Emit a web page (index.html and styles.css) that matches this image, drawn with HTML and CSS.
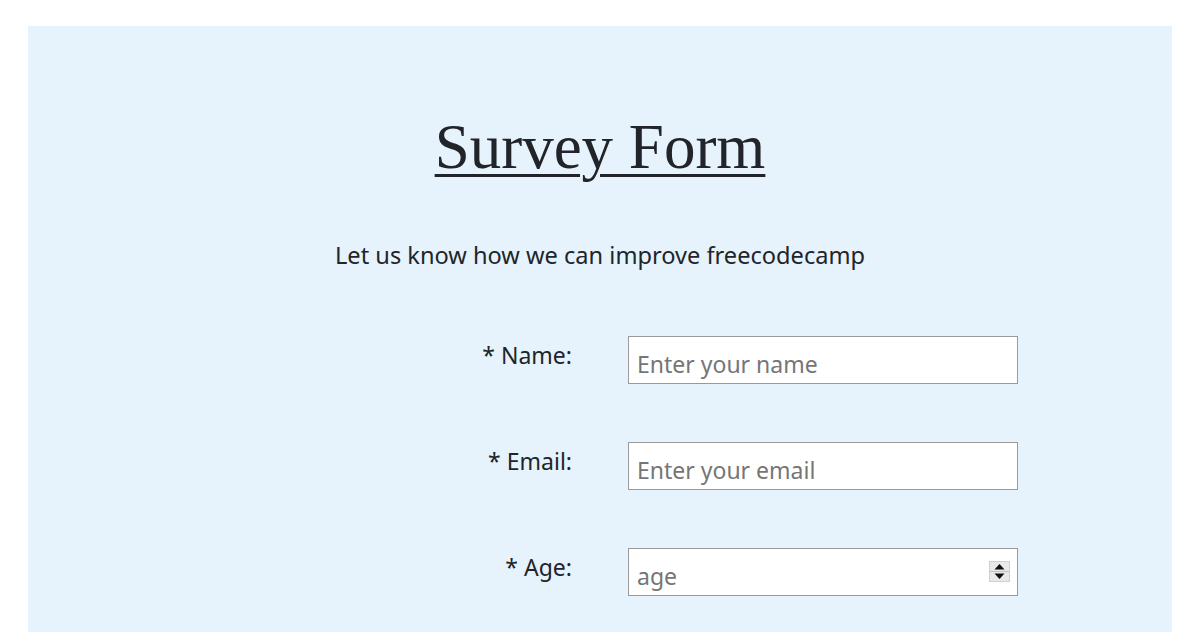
FILE: index.html
```html
<!DOCTYPE html>
<html lang="en">
<head>
<meta charset="utf-8">
<title>Survey Form</title>
<link rel="stylesheet" href="styles.css">
</head>
<body>
<main class="panel">
  <h1 class="title">Survey Form</h1>
  <p class="description">Let us know how we can improve freecodecamp</p>
  <form class="form">
    <label class="label" for="name">* Name:</label>
    <input class="field" id="name" type="text" placeholder="Enter your name">
    <label class="label" for="email">* Email:</label>
    <input class="field" id="email" type="email" placeholder="Enter your email">
    <label class="label" for="age">* Age:</label>
    <div class="number-wrap">
      <input class="field field-number" id="age" type="number" placeholder="age">
      <span class="spinner" aria-hidden="true">
        <svg width="21" height="21" viewBox="0 0 21 21">
          <rect x="0.5" y="0.5" width="20" height="20" fill="#e9e9e9" stroke="#d0d0d0"/>
          <line x1="1" y1="10.5" x2="20" y2="10.5" stroke="#c4c4c4"/>
          <polygon points="10.5,3 15.5,8.5 5.5,8.5" fill="#111"/>
          <polygon points="5.5,12.5 15.5,12.5 10.5,18" fill="#111"/>
        </svg>
      </span>
    </div>
  </form>
</main>
</body>
</html>
```

FILE: styles.css
```css
html, body {
  margin: 0;
  padding: 0;
  background: #ffffff;
}

body {
  color: #212529;
  font-family: "Noto Sans", "Open Sans", sans-serif;
}

.panel {
  margin: 26px 28px 0;
  min-height: 606px;
  background: #e6f3fc;
  padding-top: 86px;
  box-sizing: border-box;
}

.title {
  margin: 0;
  text-align: center;
  font-family: "Liberation Serif", "Times New Roman", serif;
  font-weight: 400;
  font-size: 63px;
  line-height: 71px;
  text-decoration: underline;
  text-decoration-thickness: 3px;
  text-underline-offset: 6px;
  color: #212529;
}

.description {
  margin: 57px 0 0;
  text-align: center;
  font-size: 23.6px;
  line-height: 30px;
}

.form {
  display: grid;
  grid-template-columns: 544px 390px;
  column-gap: 56px;
  row-gap: 58px;
  margin-top: 66px;
  align-items: start;
}

.label {
  text-align: right;
  font-size: 23px;
  line-height: 32px;
  padding-top: 3px;
}

.field {
  display: block;
  width: 390px;
  height: 48px;
  box-sizing: border-box;
  border: 1px solid #9a9a9a;
  background: #ffffff;
  padding: 7px 8px 0;
  font-family: "Noto Sans", "Open Sans", sans-serif;
  font-size: 23px;
  color: #212529;
  margin: 0;
  border-radius: 0;
}

.field::placeholder {
  color: #767676;
}

.number-wrap {
  position: relative;
  width: 390px;
}

.field-number {
  -moz-appearance: textfield;
}

.field-number::-webkit-inner-spin-button,
.field-number::-webkit-outer-spin-button {
  -webkit-appearance: none;
  margin: 0;
}

.spinner {
  position: absolute;
  left: 361px;
  top: 13px;
  width: 21px;
  height: 21px;
  pointer-events: none;
}

.spinner svg {
  display: block;
}
```
